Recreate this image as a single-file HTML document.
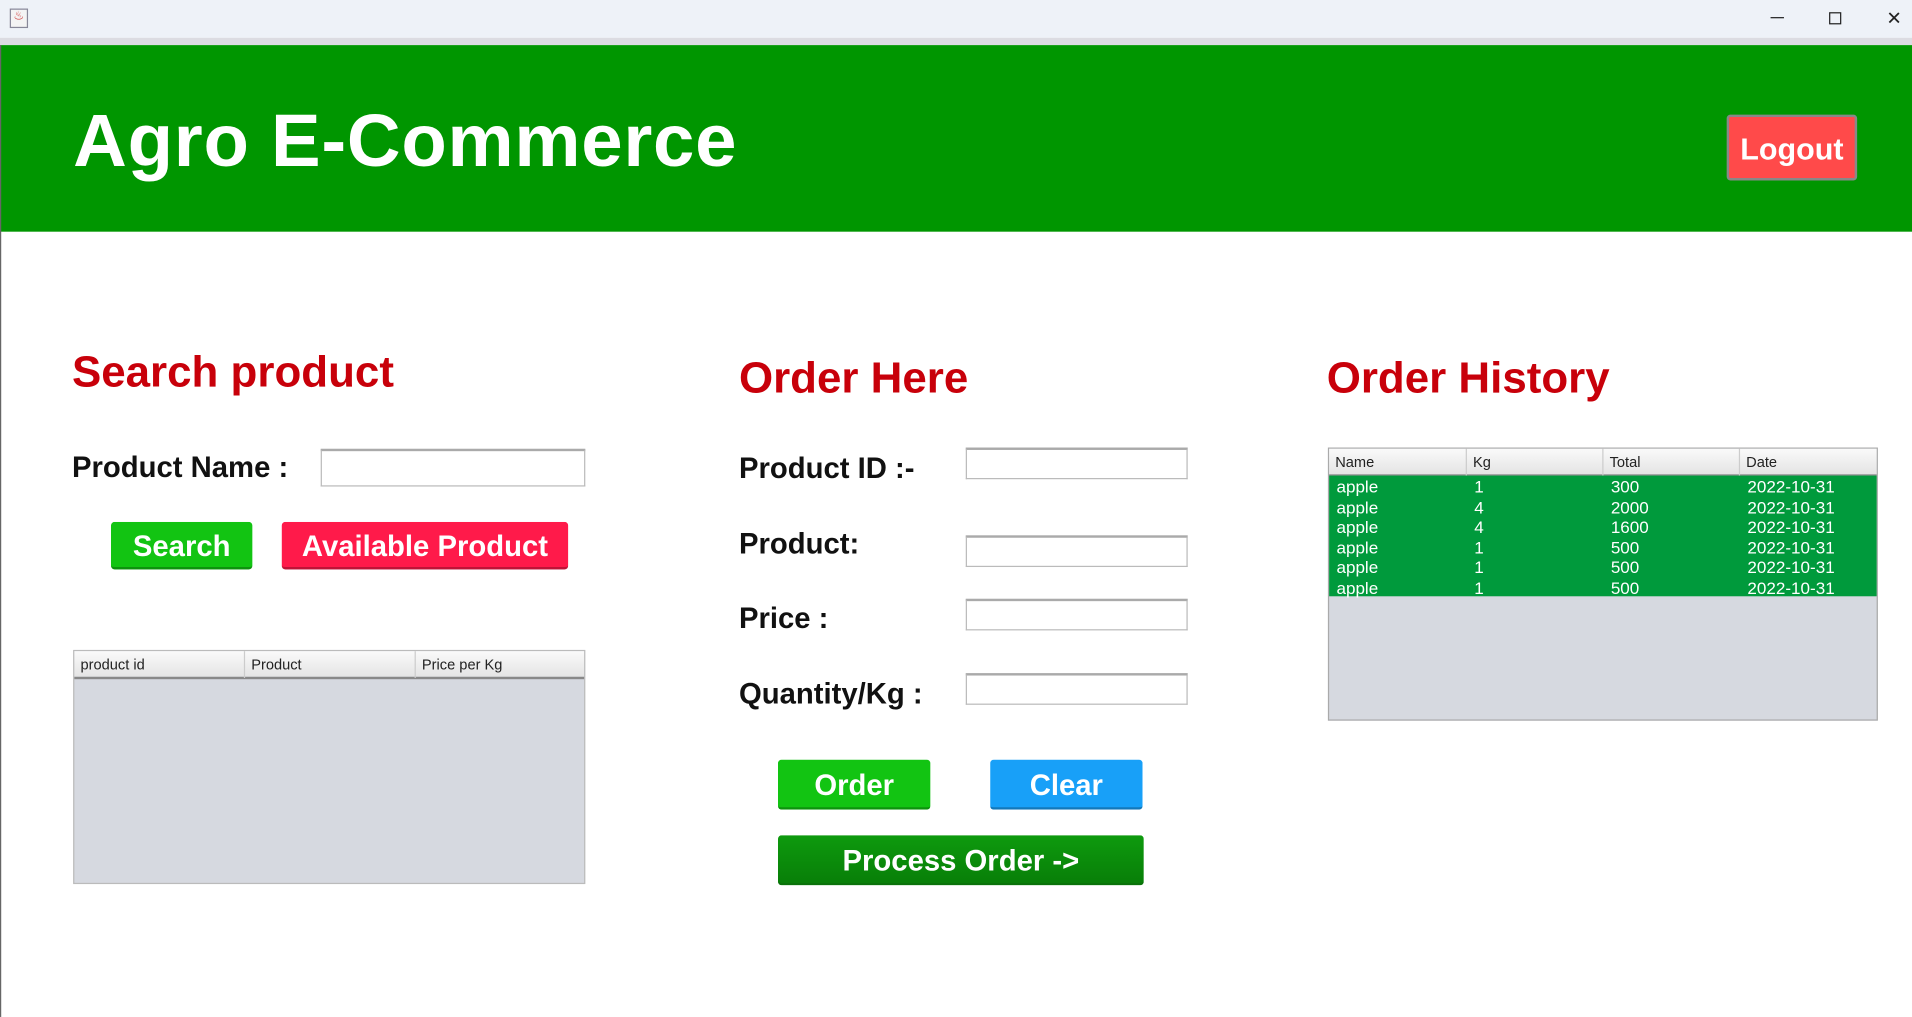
<!DOCTYPE html>
<html><head><meta charset="utf-8"><style>
*{margin:0;padding:0;box-sizing:border-box}
html,body{width:1912px;height:1017px;overflow:hidden;background:#fff}
#w{position:absolute;left:0;top:0;width:1568px;height:834px;transform:scale(1.21939);transform-origin:0 0;font-family:"Liberation Sans",sans-serif}
.a{position:absolute}
.lbl{position:absolute;font-weight:bold;font-size:24px;color:#111}
.h{position:absolute;font-weight:bold;font-size:36px;color:#c8000a}
.in{position:absolute;background:#fff;border:1px solid #bbb;border-top:2px solid #aaa}
.btn{position:absolute;color:#fff;font-weight:bold;text-align:center;border-radius:3px;border-bottom:2px solid rgba(0,0,0,.25)}
.th{position:absolute;top:0;height:22px;line-height:22px;font-size:12px;color:#222;padding-left:5px;border-right:1px solid #ccc}
.r{position:absolute;left:0;width:100%;height:16.5px;font-size:14px;color:#fff;line-height:16px}
.r span{position:absolute}
</style></head><body><div id="w">
<div class="a" style="left:0;top:0;width:1568px;height:31px;background:#eef2f8"></div>
<div class="a" style="left:8px;top:7px;width:15px;height:16px;border:1px solid #889;background:#f4f4f4;font-size:10px;color:#c33;text-align:center">♨</div>
<div class="a" style="left:1452px;top:14px;width:11px;height:1px;background:#222"></div>
<div class="a" style="left:1500px;top:10px;width:10px;height:10px;border:1px solid #222"></div>
<div class="a" style="left:1547px;top:6px;font-size:15px;color:#222">✕</div>
<div class="a" style="left:0;top:31px;width:1568px;height:6px;background:#dcdce2"></div>
<div class="a" style="left:0;top:37px;width:1568px;height:153px;background:#009600"></div>
<div class="a" style="left:0;top:37px;width:1px;height:797px;background:#666"></div>
<div class="a" style="left:60px;top:80px;font-size:61px;font-weight:bold;color:#fff;letter-spacing:0.6px">Agro E-Commerce</div>
<div class="btn" style="left:1416px;top:94px;width:107px;height:54px;background:#ff4a4a;border:2px solid #888;line-height:54px;font-size:25px">Logout</div>

<div class="h" style="left:59px;top:284px">Search product</div>
<div class="h" style="left:606px;top:289px">Order Here</div>
<div class="h" style="left:1088px;top:289px">Order History</div>

<div class="lbl" style="left:59px;top:370px">Product Name :</div>
<div class="in" style="left:263px;top:368px;width:217px;height:31px"></div>
<div class="btn" style="left:91px;top:428px;width:116px;height:39px;background:#12c412;line-height:41px;font-size:24px">Search</div>
<div class="btn" style="left:231px;top:428px;width:235px;height:39px;background:#ff1a4a;line-height:41px;font-size:24px">Available Product</div>

<div class="a" style="left:60px;top:533px;width:420px;height:192px;background:#d6d9e0;border:1px solid #bbb">
<div class="a" style="left:0;top:0;width:100%;height:23px;background:linear-gradient(#fafafa,#e4e4e4);border-bottom:2px solid #888"></div>
<div class="th" style="left:0;width:140px">product id</div>
<div class="th" style="left:140px;width:140px">Product</div>
<div class="th" style="left:280px;width:140px;border:0">Price per Kg</div>
</div>

<div class="lbl" style="left:606px;top:371px">Product ID :-</div>
<div class="lbl" style="left:606px;top:433px">Product:</div>
<div class="lbl" style="left:606px;top:494px">Price :</div>
<div class="lbl" style="left:606px;top:556px">Quantity/Kg :</div>
<div class="in" style="left:792px;top:367px;width:182px;height:26px"></div>
<div class="in" style="left:792px;top:439px;width:182px;height:26px"></div>
<div class="in" style="left:792px;top:491px;width:182px;height:26px"></div>
<div class="in" style="left:792px;top:552px;width:182px;height:26px"></div>
<div class="btn" style="left:638px;top:623px;width:125px;height:41px;background:#12c412;line-height:43px;font-size:24px">Order</div>
<div class="btn" style="left:812px;top:623px;width:125px;height:41px;background:#18a0f8;line-height:43px;font-size:24px">Clear</div>
<div class="btn" style="left:638px;top:685px;width:300px;height:41px;background:linear-gradient(#0e9a0e,#087f08);line-height:43px;font-size:24px">Process Order -&gt;</div>

<div class="a" style="left:1089px;top:367px;width:451px;height:224px;background:#d6d9e0;border:1px solid #aaa">
<div class="a" style="left:0;top:0;width:100%;height:22px;background:linear-gradient(#fafafa,#e4e4e4);border-bottom:1px solid #888"></div>
<div class="th" style="left:0;width:113px">Name</div>
<div class="th" style="left:113px;width:112px">Kg</div>
<div class="th" style="left:225px;width:112px">Total</div>
<div class="th" style="left:337px;width:112px;border:0">Date</div>
<div class="a" style="left:0;top:22px;width:100%;height:99px;background:#009a3c"></div>
<div class="r" style="top:23px"><span style="left:6px">apple</span><span style="left:119px">1</span><span style="left:231px">300</span><span style="left:343px">2022-10-31</span></div>
<div class="r" style="top:39.5px"><span style="left:6px">apple</span><span style="left:119px">4</span><span style="left:231px">2000</span><span style="left:343px">2022-10-31</span></div>
<div class="r" style="top:56px"><span style="left:6px">apple</span><span style="left:119px">4</span><span style="left:231px">1600</span><span style="left:343px">2022-10-31</span></div>
<div class="r" style="top:72.5px"><span style="left:6px">apple</span><span style="left:119px">1</span><span style="left:231px">500</span><span style="left:343px">2022-10-31</span></div>
<div class="r" style="top:89px"><span style="left:6px">apple</span><span style="left:119px">1</span><span style="left:231px">500</span><span style="left:343px">2022-10-31</span></div>
<div class="r" style="top:105.5px"><span style="left:6px">apple</span><span style="left:119px">1</span><span style="left:231px">500</span><span style="left:343px">2022-10-31</span></div>
</div>
</div></body></html>
